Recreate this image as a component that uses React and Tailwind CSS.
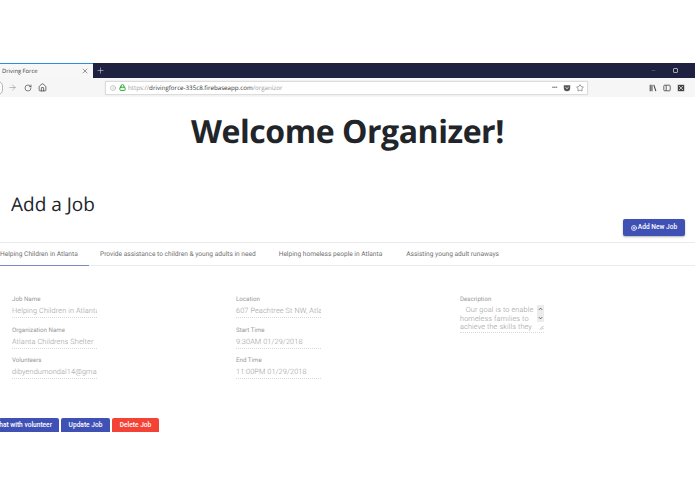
import React from "react";
import { X, Plus, ArrowRight, RotateCw, Home, Lock, Info, Minus, Star, PlusCircle } from "lucide-react";

const Field = ({ label, value }) => (
  <div className="h-[30.5px] w-[85px]">
    <div className="text-[6.2px] leading-[9px] text-[#999]">{label}</div>
    <div className="text-[7.3px] leading-[13px] tracking-[0.12px] font-light text-[#999] whitespace-nowrap overflow-hidden border-b border-dotted border-[#d8d8d8] h-[14px]">{value}</div>
  </div>
);

export default function App() {
  return (
    <div className="w-[695px] h-[494px] bg-white overflow-hidden font-['Roboto',sans-serif] [text-rendering:geometricPrecision] flex flex-col">
      <div className="h-[63px] shrink-0" />
      {/* tab strip */}
      <div className="h-[15px] shrink-0 bg-[#1e2140] flex items-stretch">
        <div className="w-[93px] bg-[#f7f7f8] border-t border-[#2a8fe0] flex items-center justify-between pl-[2px] pr-[4px] font-['Open_Sans',sans-serif] text-[5.8px] text-[#444]">
          <span>Driving Force</span>
          <X size={8} strokeWidth={1.5} className="text-[#333]" />
        </div>
        <div className="ml-[3px] flex items-center text-[#d8d8e4]"><Plus size={9} strokeWidth={1.5} /></div>
        <div className="flex-1" />
        <div className="flex items-center gap-[17px] pr-[17px] text-[#a5a7b5]">
          <Minus size={5} strokeWidth={1.5} />
          <div className="w-[5px] h-[5px] border border-[#a5a7b5] rounded-[1px]" />
        </div>
      </div>
      {/* toolbar */}
      <div className="h-[19px] shrink-0 bg-[#f6f6f7] flex items-center text-[#444]">
        <div className="w-[10px] h-[14px] -ml-[7px] rounded-full border border-[#b5b5b5] bg-white shrink-0" />
        <ArrowRight size={9} className="ml-[5px] text-[#8d8d8d]" strokeWidth={1.5} />
        <RotateCw size={8} className="ml-[7px]" strokeWidth={2} />
        <Home size={9} className="ml-[6px]" strokeWidth={2} />
        <div className="ml-[58px] w-[483px] h-[14px] bg-white border border-[#dcdcdc] rounded-[1px] flex items-center pl-[4px] pr-[3px] text-[6.2px] font-['Open_Sans',sans-serif] shadow-[0_0_1px_#ccc]">
          <Info size={6} strokeWidth={1.5} className="text-[#777]" />
          <Lock size={7} strokeWidth={3} className="ml-[3px] text-[#18a418]" />
          <span className="ml-[2px] text-[#9a9a9a]">https://</span>
          <span className="text-[#333]">drivingforce-335c8.firebaseapp.com</span>
          <span className="text-[#9a9a9a]">/organizor</span>
          <div className="flex-1" />
          <span className="text-[#555] font-bold text-[8px] tracking-[-0.5px] leading-none">···</span>
          <svg viewBox="0 0 10 10" className="w-[8px] h-[8px] ml-[6px]"><path d="M1 1.5h8v3.5a4 4 0 0 1-8 0z" fill="#555" /><path d="M3 4l2 1.8L7 4" fill="none" stroke="#fff" strokeWidth="1" /></svg>
          <Star size={8} strokeWidth={1.5} className="ml-[5px] text-[#444]" />
        </div>
        <div className="flex-1" />
        <div className="flex items-center gap-[6px] pr-[10px]">
          <svg viewBox="0 0 10 10" className="w-[8px] h-[8px]"><path d="M1.5 1v8M3.7 1v8M6 1l2.6 8" fill="none" stroke="#444" strokeWidth="1.3" /></svg>
          <svg viewBox="0 0 10 10" className="w-[8px] h-[8px]"><rect x="1" y="1.5" width="8" height="7" rx="1" fill="none" stroke="#444" strokeWidth="1" /><path d="M4 1.5v7" stroke="#444" strokeWidth="1" /></svg>
          <svg viewBox="0 0 10 10" className="w-[8px] h-[8px]"><rect x="1" y="1" width="8" height="8" fill="#444" /><path d="M2.5 2.5l5 5M7.5 2.5l-5 5" stroke="#ddd" strokeWidth="1" /></svg>
        </div>
      </div>

      {/* page */}
      <h1 className="mt-[12px] text-center font-['Open_Sans',sans-serif] font-bold text-[32px] tracking-[-0.45px] leading-[46px] text-[#212529]">Welcome Organizer!</h1>
      <div className="mt-[34px] pl-[11px] font-['Open_Sans',sans-serif] text-[19px] leading-[30px] text-[#212529]">Add a Job</div>
      <div className="flex justify-end pr-[10px]">
        <button className="w-[62px] h-[17px] bg-[#3f51b5] rounded-[2px] text-white text-[6.6px] font-medium flex items-center justify-center gap-[1px] shadow-[0_1px_2px_rgba(0,0,0,0.3)]">
          <PlusCircle size={6} strokeWidth={3} />
          <span>Add New Job</span>
        </button>
      </div>
      {/* tabs */}
      <div className="mt-[6px] h-[24px] border-y border-[#ebebeb] flex text-[6.6px] text-[#6f6f6f] shrink-0">
        <div className="w-[89px] border-b-[1.5px] border-[#7f88c8] -mb-px pt-[1px] flex items-center whitespace-nowrap">Helping Children in Atlanta</div>
        <div className="ml-[11px] pt-[1px] flex items-center whitespace-nowrap">Provide assistance to children &amp; young adults in need</div>
        <div className="ml-[23px] pt-[1px] flex items-center whitespace-nowrap">Helping homeless people in Atlanta</div>
        <div className="ml-[24px] pt-[1px] flex items-center whitespace-nowrap">Assisting young adult runaways</div>
      </div>
      {/* form */}
      <div className="mt-[29px] pl-[12px] flex shrink-0">
        <div className="w-[224px]">
          <Field label="Job Name" value="Helping Children in Atlanta" />
          <Field label="Organization Name" value="Atlanta Childrens Shelter" />
          <Field label="Volunteers" value="dibyendumondal14@gmail.com" />
        </div>
        <div className="w-[224px]">
          <Field label="Location" value="607 Peachtree St NW, Atlanta" />
          <Field label="Start Time" value="9:30AM 01/29/2018" />
          <Field label="End Time" value="11:00PM 01/29/2018" />
        </div>
        <div className="w-[84px] relative">
          <div className="text-[6.2px] leading-[9px] text-[#999]">Description</div>
          <div className="text-[7.3px] font-light leading-[8.5px] mt-[2px] h-[27px] tracking-[0.12px] text-[#999] whitespace-pre overflow-hidden border-b border-dotted border-[#d8d8d8]">{"   Our goal is to enable\nhomeless families to\nachieve the skills they"}</div>
          <div className="absolute right-0 top-[10px] w-[7px] h-[26px] flex flex-col items-center text-[#555]">
            <div className="w-[7px] h-[17px] bg-[#ececec] flex flex-col items-center justify-between py-[2px]">
              <svg viewBox="0 0 6 4" className="w-[5px] h-[4px]"><path d="M1 3l2-2 2 2" fill="none" stroke="#444" strokeWidth="1" /></svg>
              <svg viewBox="0 0 6 4" className="w-[5px] h-[4px]"><path d="M1 1l2 2 2-2" fill="none" stroke="#444" strokeWidth="1" /></svg>
            </div>
            <svg viewBox="0 0 6 6" className="w-[5px] h-[5px] ml-auto mt-[3px]"><path d="M5.5 1L1 5.5M5.5 3.5L3.5 5.5" stroke="#999" strokeWidth="0.8" /></svg>
          </div>
        </div>
      </div>
      {/* actions */}
      <div className="mt-[31.5px] flex gap-[2px] h-[14px] overflow-hidden shrink-0 text-white text-[6.6px] font-medium">
        <button className="w-[60px] -ml-px bg-[#3f51b5] rounded-t-[2px] flex justify-end items-center pr-[7px] pt-[1px] whitespace-nowrap overflow-hidden">Chat with volunteer</button>
        <button className="w-[49px] bg-[#3f51b5] rounded-t-[2px] pt-[1px]">Update Job</button>
        <button className="w-[47px] bg-[#f44336] rounded-t-[2px] pt-[1px]">Delete Job</button>
      </div>
    </div>
  );
}
